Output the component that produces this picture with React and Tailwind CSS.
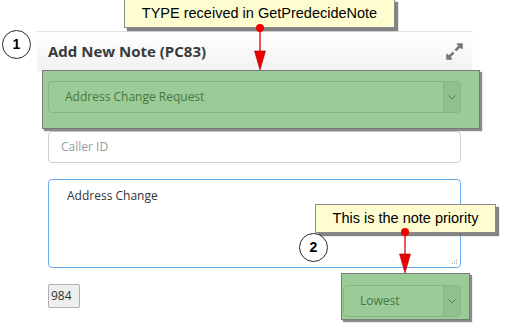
import React from "react";
import { FaExpandAlt } from "react-icons/fa";

const formFont = { fontFamily: '"Open Sans", "Noto Sans", sans-serif' };
const calloutFont = { fontFamily: '"Liberation Sans", Arial, sans-serif' };

function Chevron() {
  return (
    <svg width="8" height="5" viewBox="0 0 8 5" fill="none">
      <path d="M0.5 0.5 L4 4 L7.5 0.5" stroke="#444" strokeWidth="1" />
    </svg>
  );
}

function Select({ label, className, textPad }) {
  return (
    <div className={`flex h-[32px] rounded-[4px] border border-[#c8c8c8] bg-white ${className}`}>
      <div className={`flex flex-1 items-center text-[12px] text-[#2a2a2a] ${textPad}`}>{label}</div>
      <div className="flex w-[17px] items-center justify-center rounded-r-[3px] border-l border-[#c8c8c8] bg-[#e4e4e4]">
        <Chevron />
      </div>
    </div>
  );
}

function Callout({ className, children }) {
  return (
    <div
      className={`absolute flex items-center justify-center border border-[#8a8a8a] bg-[#fdfdd0] text-[14.5px] text-black shadow-[3px_3px_1px_rgba(90,90,90,0.75)] ${className}`}
      style={calloutFont}
    >
      {children}
    </div>
  );
}

function Step({ className, n }) {
  return (
    <div
      className={`absolute flex h-[29px] w-[29px] items-center justify-center rounded-full border-[1.5px] border-[#2a2a2a] bg-white text-[14px] font-bold text-black ${className}`}
      style={calloutFont}
    >
      {n}
    </div>
  );
}

function Pointer({ className, height }) {
  return (
    <svg
      className={`absolute ${className}`}
      width="14"
      height={height}
      viewBox={`0 0 14 ${height}`}
    >
      <line x1="7" y1="4" x2="7" y2={height - 18} stroke="#e00000" strokeWidth="1.3" />
      <circle cx="7" cy="4" r="4" fill="#ee0000" />
      <polygon points={`1.5,${height - 19} 12.5,${height - 19} 7,${height}`} fill="#ee0000" stroke="#b00000" strokeWidth="0.6" />
    </svg>
  );
}

export default function App() {
  return (
    <div className="relative h-[334px] w-[507px] overflow-hidden bg-white" style={formFont}>
      <div className="pl-[37px] pt-[31px]">
        <div className="w-[435px]">
          <div className="flex h-[39px] items-center justify-between border-t border-[#e2e2e2] bg-gradient-to-b from-white to-[#f2f2f2] pl-[11px] pr-[8px] shadow-[0_1px_1px_rgba(0,0,0,0.05)]">
            <span className="text-[15px] font-bold text-[#3a3a3a]">Add New Note (PC83)</span>
            <FaExpandAlt className="text-[#777]" size={19} />
          </div>
          <div className="flex flex-col px-[11px] pt-[11px]">
            <Select label="Address Change Request" className="w-[413px]" textPad="pl-[16px]" />
            <div className="mt-[18px] flex h-[32px] items-center rounded-[4px] border border-[#cfcfcf] pl-[12px] text-[12px] text-[#999]">
              Caller ID
            </div>
            <div className="relative mt-[16px] h-[89px] rounded-[4px] border border-[#66aef0] pl-[18px] pt-[7px] text-[12px] text-[#333]">
              Address Change
              <svg className="absolute bottom-[2px] right-[2px]" width="7" height="7" viewBox="0 0 7 7">
                <rect x="5" y="1" width="1" height="1" fill="#aaa" />
                <rect x="3" y="3" width="1" height="1" fill="#aaa" />
                <rect x="5" y="3" width="1" height="1" fill="#aaa" />
                <rect x="1" y="5" width="1" height="1" fill="#aaa" />
                <rect x="3" y="5" width="1" height="1" fill="#aaa" />
                <rect x="5" y="5" width="1" height="1" fill="#aaa" />
              </svg>
            </div>
            <div className="mt-[16px] flex items-start justify-between">
              <div className="flex h-[24px] w-[32px] items-center rounded-[2px] border border-[#b0b0b0] bg-[#eeeeee] pl-[2px] text-[12px] text-[#333]">
                984
              </div>
              <Select label="Lowest" className="mt-[1px] w-[118px]" textPad="pl-[16px]" />
            </div>
          </div>
        </div>
      </div>

      {/* annotation overlays */}
      <div className="absolute left-[42px] top-[70px] h-[59px] w-[438px] border border-[#7a7a7a] bg-[rgba(88,168,80,0.6)] shadow-[2px_2px_1px_rgba(90,90,90,0.7)]" />
      <div className="absolute left-[341px] top-[273px] h-[47px] w-[129px] border border-[#7a7a7a] bg-[rgba(88,168,80,0.6)] shadow-[2px_2px_1px_rgba(90,90,90,0.7)]" />

      <Callout className="left-[124px] top-[-1px] h-[29px] w-[271px]">TYPE received in GetPredecideNote</Callout>
      <Callout className="left-[315px] top-[204px] h-[29px] w-[181px]">This is the note priority</Callout>

      <Pointer className="left-[253px] top-[24px]" height={46} />
      <Pointer className="left-[398px] top-[228px]" height={45} />

      <Step className="left-[2px] top-[30px]" n="1" />
      <Step className="left-[299px] top-[233px]" n="2" />
    </div>
  );
}
